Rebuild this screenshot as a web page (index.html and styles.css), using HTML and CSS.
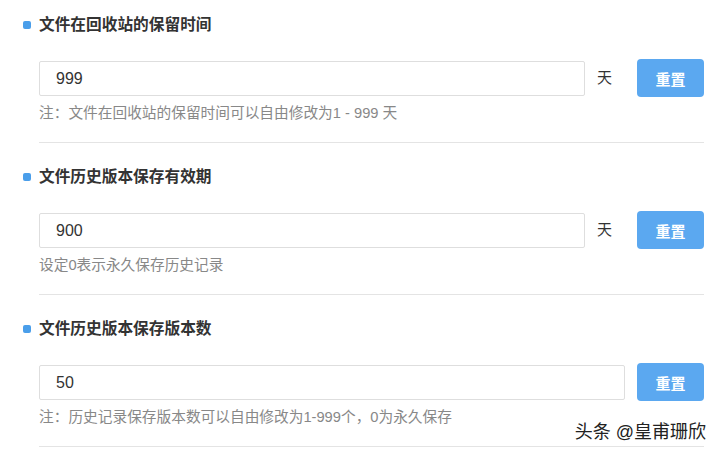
FILE: index.html
```html
<!DOCTYPE html>
<html lang="zh">
<head>
<meta charset="utf-8">
<link rel="stylesheet" href="styles.css">
</head>
<body>
<div class="page">
  <section class="section">
    <div class="title"><span class="dot"></span><span>文件在回收站的保留时间</span></div>
    <div class="body">
      <div class="row">
        <div class="input">999</div>
        <span class="unit">天</span>
        <button class="btn">重置</button>
      </div>
      <div class="note">注：文件在回收站的保留时间可以自由修改为1 - 999 天</div>
      <div class="divider"></div>
    </div>
  </section>
  <section class="section">
    <div class="title"><span class="dot"></span><span>文件历史版本保存有效期</span></div>
    <div class="body">
      <div class="row">
        <div class="input">900</div>
        <span class="unit">天</span>
        <button class="btn">重置</button>
      </div>
      <div class="note">设定0表示永久保存历史记录</div>
      <div class="divider"></div>
    </div>
  </section>
  <section class="section">
    <div class="title"><span class="dot"></span><span>文件历史版本保存版本数</span></div>
    <div class="body">
      <div class="row">
        <div class="input">50</div>
        <button class="btn">重置</button>
      </div>
      <div class="note">注：历史记录保存版本数可以自由修改为1-999个，0为永久保存</div>
      <div class="divider"></div>
    </div>
  </section>
</div>
<div class="watermark">头条 @皇甫珊欣</div>
</body>
</html>
```

FILE: styles.css
```css
* { box-sizing: border-box; }
html, body { margin: 0; padding: 0; background: #fff; }
body {
  width: 720px;
  height: 454px;
  overflow: hidden;
  position: relative;
  font-family: "Liberation Sans", "Noto Sans CJK SC", sans-serif;
  color: #333;
}
.page { padding: 15px 16px 0 23px; }
.section + .section { margin-top: 24px; }
.title {
  display: flex;
  align-items: center;
  gap: 8px;
  height: 20px;
  font-size: 15.7px;
  font-weight: bold;
  line-height: 20px;
  color: #333;
}
.dot {
  width: 8px;
  height: 8px;
  border-radius: 2px;
  background: #4a9eea;
  flex: none;
}
.body { margin-left: 16px; }
.row {
  display: flex;
  align-items: center;
  gap: 12px;
  height: 38px;
  margin-top: 24px;
}
.input {
  flex: 1;
  height: 35px;
  border: 1px solid #dedede;
  border-radius: 2px;
  padding-left: 16px;
  font-size: 16px;
  line-height: 33px;
  color: #333;
}
.unit {
  font-size: 15px;
  line-height: 20px;
  color: #333;
  margin-right: 13px;
}
.btn {
  width: 67px;
  height: 38px;
  border: none;
  border-radius: 4px;
  background: #5ba8f0;
  color: #fff;
  font-family: inherit;
  font-size: 15px;
  font-weight: bold;
  padding: 0;
  flex: none;
}
.note {
  margin-top: 6px;
  font-size: 14.7px;
  line-height: 20px;
  color: #888;
}
.divider {
  margin-top: 19px;
  height: 1px;
  background: #e4e4e4;
}
.watermark {
  position: absolute;
  right: 14px;
  bottom: 11px;
  font-size: 18px;
  line-height: 22px;
  color: #222;
  text-shadow: 0 0 2px #fff, 0 0 2px #fff;
}
```
